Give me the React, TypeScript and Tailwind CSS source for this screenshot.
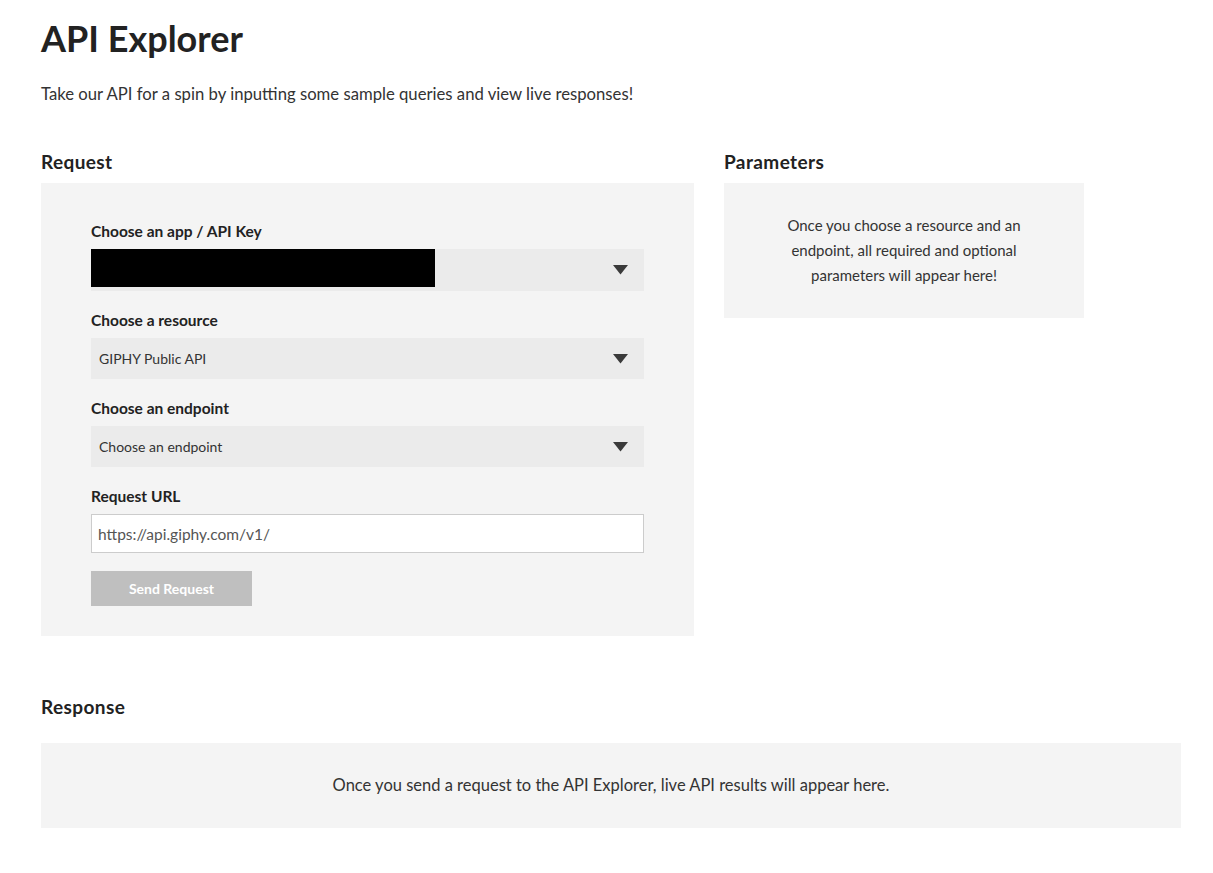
import { useState } from "react";

const Caret = () => (
  <svg width="15" height="10" viewBox="0 0 15 10" className="shrink-0">
    <path d="M0 0 H15 L7.5 9.5 Z" fill="#3a3a3a" />
  </svg>
);

const Field = ({ label, children }: { label: string; children: React.ReactNode }) => (
  <div className="mb-[20px]">
    <label className="block text-[15.5px] leading-[18px] font-bold text-[#222] mb-[9px]">{label}</label>
    {children}
  </div>
);

const FakeSelect = ({ value, redacted }: { value?: string; redacted?: boolean }) => (
  <div
    className={`relative bg-[#ebebeb] flex items-center justify-between pl-2 pr-4 ${redacted ? "h-[42px]" : "h-[41px]"}`}
  >
    {redacted ? (
      <div className="absolute left-0 top-0 w-[344px] h-[38px] bg-black" />
    ) : (
      <span className="text-[14px] text-[#333]">{value}</span>
    )}
    <span className="ml-auto">
      <Caret />
    </span>
  </div>
);

export default function App() {
  const [url, setUrl] = useState("https://api.giphy.com/v1/");

  return (
    <div className="bg-white min-h-screen text-[#222] font-['Lato',sans-serif] px-[41px] pt-[14px] pb-12">
      <h1 className="text-[36px] leading-[48px] font-bold">API Explorer</h1>
      <p className="mt-[20px] text-[16.7px] leading-6 text-[#333]">
        Take our API for a spin by inputting some sample queries and view live responses!
      </p>

      <div className="mt-[44px] flex gap-[30px] items-start">
        <section className="w-[653px]">
          <h2 className="text-[19px] leading-6 font-bold tracking-[0.4px] mb-[9px]">Request</h2>
          <div className="bg-[#f4f4f4] px-[50px] pt-[39px] pb-[30px]">
            <Field label="Choose an app / API Key">
              <FakeSelect redacted />
            </Field>
            <Field label="Choose a resource">
              <FakeSelect value="GIPHY Public API" />
            </Field>
            <Field label="Choose an endpoint">
              <FakeSelect value="Choose an endpoint" />
            </Field>
            <div>
              <label className="block text-[15.5px] leading-[18px] font-bold text-[#222] mb-[9px]">Request URL</label>
              <input
                value={url}
                onChange={(e) => setUrl(e.target.value)}
                className="w-full h-[39px] bg-white border border-[#cccccc] px-[6px] text-[15.5px] text-[#555] outline-none"
              />
            </div>
            <button
              disabled
              className="mt-[18px] w-[161px] h-[35px] bg-[#bfbfbf] text-white text-[14px] font-bold"
            >
              Send Request
            </button>
          </div>
        </section>

        <section className="w-[360px]">
          <h2 className="text-[19px] leading-6 font-bold tracking-[0.4px] mb-[9px]">Parameters</h2>
          <div className="bg-[#f4f4f4] h-[135px] flex items-center justify-center px-14">
            <p className="text-[15px] leading-[25px] text-center text-[#333]">
              Once you choose a resource and an endpoint, all required and optional parameters will appear here!
            </p>
          </div>
        </section>
      </div>

      <section className="mt-[59px] w-[1140px]">
        <h2 className="text-[19px] leading-6 font-bold tracking-[0.4px] mb-[24px]">Response</h2>
        <div className="bg-[#f4f4f4] h-[85px] flex items-center justify-center">
          <p className="text-[16.5px] text-[#333]">
            Once you send a request to the API Explorer, live API results will appear here.
          </p>
        </div>
      </section>
    </div>
  );
}
